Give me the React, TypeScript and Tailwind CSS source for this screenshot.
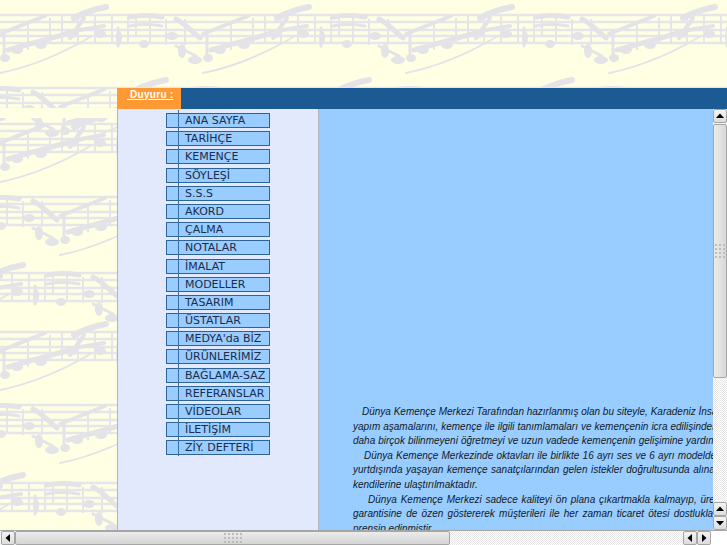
import React from "react";

const menu = [
  "ANA SAYFA",
  "TARİHÇE",
  "KEMENÇE",
  "SÖYLEŞİ",
  "S.S.S",
  "AKORD",
  "ÇALMA",
  "NOTALAR",
  "İMALAT",
  "MODELLER",
  "TASARIM",
  "ÜSTATLAR",
  "MEDYA'da BİZ",
  "ÜRÜNLERİMİZ",
  "BAĞLAMA-SAZ",
  "REFERANSLAR",
  "VİDEOLAR",
  "İLETİŞİM",
  "ZİY. DEFTERİ",
];

const lines = [
  { text: "Dünya Kemençe Merkezi Tarafından hazırlanmış olan bu siteyle, Karadeniz İnsanlarının", indent: "pl-[9px]", space: "" },
  { text: "yapım aşamalarını, kemençe ile ilgili tanımlamaları ve kemençenin icra edilişinden", indent: "", space: "[word-spacing:0.2px]" },
  { text: "daha birçok bilinmeyeni öğretmeyi ve uzun vadede kemençenin gelişimine yardımcı", indent: "", space: "[word-spacing:0.2px]" },
  { text: "Dünya Kemençe Merkezinde oktavları ile birlikte 16 ayrı ses ve 6 ayrı modelde", indent: "pl-[11px]", space: "[word-spacing:0.4px]" },
  { text: "yurtdışında yaşayan kemençe sanatçılarından gelen istekler doğrultusunda alınan", indent: "", space: "[word-spacing:0.8px]" },
  { text: "kendilerine ulaştırılmaktadır.", indent: "", space: "" },
  { text: "Dünya Kemençe Merkezi sadece kaliteyi ön plana çıkartmakla kalmayıp, üretim", indent: "pl-[15px]", space: "[word-spacing:1px]" },
  { text: "garantisine de özen göstererek müşterileri ile her zaman ticaret ötesi dostluklar", indent: "", space: "[word-spacing:1.5px]" },
  { text: "prensip edinmiştir.", indent: "", space: "" },
];

// one band of the sheet music wallpaper, 203px wide
const StaffBand = () => (
  <g>
    <g stroke="#e6e6ea" fill="none">
      <path d="M0 1H203M0 8H203M0 16H203M0 22H203M0 29H203" strokeWidth="2.5" />
      <path d="M62 1V29M78 1V29M95 1V29M112 1V29M128 3V29M136 3V22M150 3V29M166 5V31M185 5V31M28 8V36M50 4V30" strokeWidth="2" />
    </g>
    <g stroke="#e3e3e8" fill="none" strokeLinecap="round">
      <path d="M0 20L45 2" strokeWidth="4" />
      <path d="M8 36L66 20" strokeWidth="5" />
      <path d="M74 4C85 -2 95 -5 106 -7" strokeWidth="6" />
      <path d="M68 18L104 12" strokeWidth="4" />
      <path d="M84 4L70 24" strokeWidth="4" />
      <path d="M130 3C140 1 150 1 162 3" strokeWidth="5" />
      <path d="M130 12C140 10 150 10 162 12" strokeWidth="3" />
      <path d="M176 5C186 10 192 18 200 24" strokeWidth="5" />
      <path d="M176 32L196 42" strokeWidth="3" />
      <path d="M0 59C35 52 70 35 92 22" strokeWidth="2" />
      <path d="M4 18V45" strokeWidth="3" />
      <path d="M118 14V32" strokeWidth="3" />
    </g>
    <g fill="#e3e3e8">
      <ellipse cx="5" cy="44" rx="5" ry="4" />
      <ellipse cx="17" cy="36" rx="6" ry="4" />
      <ellipse cx="41" cy="31" rx="6" ry="4" />
      <ellipse cx="72" cy="20" rx="6" ry="4" />
      <ellipse cx="100" cy="20" rx="6" ry="4" />
      <ellipse cx="119" cy="24" rx="3" ry="7" />
      <ellipse cx="144" cy="30" rx="5" ry="4" />
      <ellipse cx="172" cy="22" rx="6" ry="4" />
      <ellipse cx="182" cy="37" rx="4" ry="7" />
      <ellipse cx="195" cy="46" rx="7" ry="4" />
    </g>
  </g>
);

const bands = [
  { y: 14, dx: 0 },
  { y: 87, dx: 60 },
  { y: 123, dx: 0 },
  { y: 196, dx: 60 },
  { y: 272, dx: 120 },
  { y: 331, dx: 0 },
  { y: 404, dx: 60 },
  { y: 482, dx: 120 },
];

const Wallpaper = () => (
  <svg className="absolute inset-0" width="727" height="545" viewBox="0 0 727 545">
    <defs>
      <g id="band">
        <StaffBand />
      </g>
    </defs>
    {bands.map((band) =>
      [-203, 0, 203, 406, 609].map((x) => (
        <use key={`${x}-${band.y}`} href="#band" x={x + band.dx} y={band.y} />
      ))
    )}
    <rect x="0" y="108" width="727" height="10" fill="#ffffe3" />
  </svg>
);

const Grip = ({ cols, rows }: { cols: number; rows: number }) => (
  <svg width={cols * 4} height={rows * 4}>
    {Array.from({ length: cols * rows }).map((_, i) => (
      <rect
        key={i}
        x={(i % cols) * 4 + 1}
        y={Math.floor(i / cols) * 4 + 1}
        width="2"
        height="2"
        fill="#bdbdbd"
      />
    ))}
  </svg>
);

const ScrollButton = ({ points }: { points: string }) => (
  <div className="flex h-[14px] w-[14px] shrink-0 items-center justify-center rounded-[2px] border border-[#a6a6a6] bg-gradient-to-b from-[#f4f4f4] to-[#dcdcdc]">
    <svg width="8" height="8" viewBox="0 0 8 8">
      <polygon points={points} fill="#000" />
    </svg>
  </div>
);

const VerticalScrollbar = () => (
  <div className="flex w-[14px] shrink-0 flex-col bg-[#f1f1f6]">
    <ScrollButton points="4,1.5 8,6 0,6" />
    <div className="mt-px flex h-[254px] items-center justify-center rounded-[2px] border border-[#a6a6a6] bg-gradient-to-r from-[#ececec] to-[#d8d8d8]">
      <Grip cols={3} rows={4} />
    </div>
    <div className="flex-1 bg-[repeating-conic-gradient(#e6e6e6_0_25%,#ffffff_0_50%)] bg-[length:2px_2px]" />
    <ScrollButton points="4,1.5 8,6 0,6" />
    <ScrollButton points="0,2 8,2 4,6.5" />
  </div>
);

const HorizontalScrollbar = () => (
  <div className="flex h-[15px] border-t border-[#a6a6a6] bg-[#f3f3f3] pl-px">
    <ScrollButton points="1.5,4 6,0 6,8" />
    <div className="flex w-[435px] items-center justify-center rounded-[2px] border border-[#a6a6a6] bg-gradient-to-b from-[#ececec] to-[#d4d4d4]">
      <Grip cols={5} rows={3} />
    </div>
    <div className="flex-1 bg-[repeating-conic-gradient(#e6e6e6_0_25%,#ffffff_0_50%)] bg-[length:2px_2px]" />
    <ScrollButton points="1.5,4 6,0 6,8" />
    <ScrollButton points="6.5,4 2,0 2,8" />
    <div className="w-[16px] bg-white" />
  </div>
);

export default function App() {
  return (
    <div className="relative flex h-[545px] w-[727px] flex-col overflow-hidden bg-[#ffffe3] font-['Liberation_Sans',sans-serif]">
      <Wallpaper />

      <div className="relative ml-[117px] mt-[88px] flex h-[21px] shrink-0 bg-[#1c5a93]">
        <div className="w-[64px] whitespace-pre bg-[#ff9933] pl-[10px] text-[10px] font-bold leading-[13px] tracking-[0.3px] text-white underline">
          {" Duyuru :"}
        </div>
      </div>

      <div className="relative ml-[117px] flex min-h-0 flex-1">
        <div className="w-[202px] shrink-0 border-x border-[#b4b4bc] bg-[#e3e9fd] pl-[48px] pt-[4px]">
          <ul className="relative w-[104px] font-['DejaVu_Sans',sans-serif] text-[11px] leading-[13px] text-[#1b2c4c]">
            <li className="absolute -top-[3px] left-[12px] h-[346px] w-px bg-[#3a6ea5]" />
            {menu.map((item) => (
              <li
                key={item}
                className="mb-[3.2px] h-[15px] border border-[#2f6496] bg-[#99ccff] pl-[18px] whitespace-nowrap"
              >
                {item}
              </li>
            ))}
          </ul>
        </div>

        <div className="min-w-0 flex-1 overflow-hidden bg-[#99ccff] pl-[34px] pt-[296px] text-[10px] italic leading-[14.6px] text-[#111a28]">
          {lines.map((line) => (
            <p key={line.text} className={`whitespace-nowrap ${line.indent} ${line.space}`}>
              {line.text}
            </p>
          ))}
        </div>

        <VerticalScrollbar />
      </div>

      <div className="relative">
        <HorizontalScrollbar />
      </div>
    </div>
  );
}
